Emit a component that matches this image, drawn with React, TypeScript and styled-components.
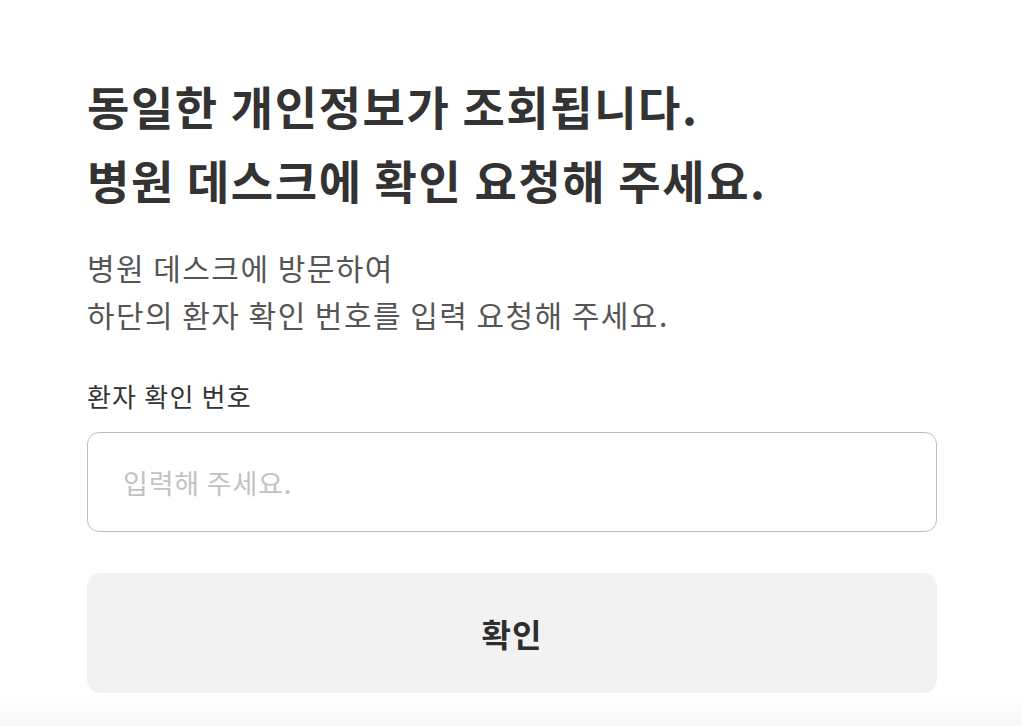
import { FunctionComponent } from "react";
import styled, { createGlobalStyle } from "styled-components";

const GlobalStyle = createGlobalStyle`
  * {
    box-sizing: border-box;
    margin: 0;
    padding: 0;
  }
  body {
    font-family: "Noto Sans CJK KR", "Noto Sans", sans-serif;
    background: #ffffff;
  }
`;

const Page = styled.main`
  display: flex;
  flex-direction: column;
  height: 726px;
  padding: 68px 85px 0 87px;
  background: linear-gradient(to bottom, #ffffff 0, #ffffff 692px, #f8f8f8 726px);
`;

const Title = styled.h1`
  font-size: 46px;
  font-weight: 700;
  line-height: 74px;
  letter-spacing: 1.6px;
  color: #333333;
`;

const Description = styled.p`
  margin-top: 28px;
  font-size: 30px;
  font-weight: 400;
  line-height: 47px;
  letter-spacing: 1.45px;
  color: #555555;
`;

const Field = styled.div`
  display: flex;
  flex-direction: column;
  gap: 20px;
  margin-top: 42px;
`;

const Label = styled.label`
  font-size: 26px;
  font-weight: 400;
  line-height: 32px;
  letter-spacing: 1.2px;
  color: #333333;
`;

const Input = styled.input`
  height: 100px;
  width: 100%;
  padding: 0 35px;
  border: 1.5px solid #bdbdbd;
  border-radius: 12px;
  font-family: inherit;
  font-size: 27px;
  letter-spacing: 0.8px;
  color: #333333;
  outline: none;

  &::placeholder {
    color: #c2c2c2;
  }
`;

const SubmitButton = styled.button`
  margin-top: 41px;
  height: 120px;
  width: 100%;
  border: none;
  border-radius: 14px;
  background: #f2f2f2;
  font-family: inherit;
  font-size: 32px;
  font-weight: 700;
  letter-spacing: 1px;
  color: #2e2e2e;
  cursor: pointer;
`;

const App: FunctionComponent = () => {
  return (
    <>
      <GlobalStyle />
      <Page>
        <Title>
          동일한 개인정보가 조회됩니다.
          <br />
          병원 데스크에 확인 요청해 주세요.
        </Title>
        <Description>
          병원 데스크에 방문하여
          <br />
          하단의 환자 확인 번호를 입력 요청해 주세요.
        </Description>
        <Field>
          <Label htmlFor="patient-code">환자 확인 번호</Label>
          <Input id="patient-code" placeholder="입력해 주세요." />
        </Field>
        <SubmitButton type="button">확인</SubmitButton>
      </Page>
    </>
  );
};

export default App;
